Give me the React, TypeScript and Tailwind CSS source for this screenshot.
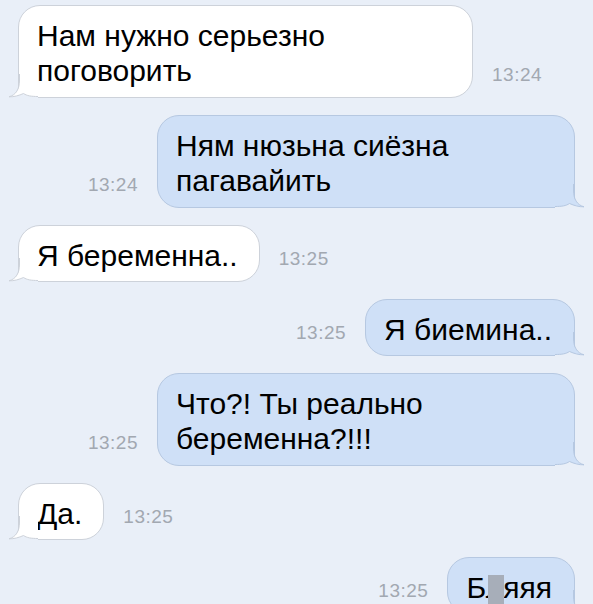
import React from "react";

type Side = "in" | "out";

const Tail = ({ side }: { side: Side }) => {
  const incoming = side === "in";
  const fill = incoming ? "#ffffff" : "#cfe0f7";
  const stroke = incoming ? "#cdd2da" : "#b6c8e1";
  return (
    <svg
      width="30"
      height="24"
      viewBox="0 0 30 24"
      className={
        incoming
          ? "absolute -left-[11px] -bottom-[1px]"
          : "absolute -right-[11px] -bottom-[1px]"
      }
    >
      <g transform={incoming ? undefined : "translate(30 0) scale(-1 1)"}>
        <path
          d="M1 23 C6 23 11 21.5 15.5 19.5 C19 21.8 23 22.5 30 22.5 L30 24 L0 24 Z"
          fill="#e9eff8"
        />
        <path
          d="M12 0 L12 6 C12 15 8 21 1 22.8 C6 23 11 21.5 15.5 19.5 C19 21.8 23 22.5 30 22.5 L30 0 Z"
          fill={fill}
        />
        <path
          d="M11.5 0 L11.5 6 C11.5 15 8 21 1 22.8 C6 23 11 21.5 15.5 19.5 C19 21.8 23 22.5 30 22.5"
          fill="none"
          stroke={stroke}
          strokeWidth="1"
        />
      </g>
    </svg>
  );
};

const Bubble = ({
  side,
  multi,
  className = "",
  children,
}: {
  side: Side;
  multi?: boolean;
  className?: string;
  children: React.ReactNode;
}) => {
  const incoming = side === "in";
  return (
    <div
      className={
        "relative shrink-0 rounded-[22px] border pt-[12px] pl-[18px] text-[30px] leading-[35px] text-black " +
        (multi ? "pb-[9px] " : "pb-[8px] ") +
        (incoming
          ? "bg-white border-[#cdd2da] rounded-bl-none pr-[21px] "
          : "bg-[#cfe0f7] border-[#b6c8e1] rounded-br-none pr-[22px] ") +
        className
      }
    >
      {children}
      <Tail side={side} />
    </div>
  );
};

const Time = ({ children, side }: { children: string; side: Side }) => (
  <span
    className={
      "mb-[13px] text-[19px] leading-5 tracking-[0.5px] text-[#a2a8b1] " +
      (side === "in" ? "ml-[19px]" : "mr-[19px]")
    }
  >
    {children}
  </span>
);

type RowProps = { time: string; multi?: boolean; className?: string; children: React.ReactNode };

const In = ({ time, multi, className, children }: RowProps) => (
  <div className="flex items-end">
    <Bubble side="in" multi={multi} className={className}>
      {children}
    </Bubble>
    <Time side="in">{time}</Time>
  </div>
);

const Out = ({ time, multi, className, children }: RowProps) => (
  <div className="flex items-end justify-end">
    <Time side="out">{time}</Time>
    <Bubble side="out" multi={multi} className={className}>
      {children}
    </Bubble>
  </div>
);

export default function App() {
  return (
    <div className="flex h-[604px] w-full flex-col gap-[17px] overflow-hidden bg-[#e9eff8] px-[18px] pt-[5px] font-['Liberation_Sans',Arial,sans-serif]">
      <In time="13:24" multi className="w-[455px]">
        Нам нужно серьезно
        <br />
        поговорить
      </In>
      <Out time="13:24" multi className="w-[418px]">
        Ням нюзьна сиёзна
        <br />
        пагавайить
      </Out>
      <In time="13:25">Я беременна..</In>
      <Out time="13:25">Я биемина..</Out>
      <Out time="13:25" multi className="w-[418px]">
        Что?! Ты реально
        <br />
        беременна?!!!
      </Out>
      <In time="13:25">Да.</In>
      <Out time="13:25">
        Б
        <span className="relative">
          л
          <span className="absolute left-[2px] top-[4px] h-[30px] w-[16px] bg-[#a7aeb9]" />
        </span>
        яяя
      </Out>
    </div>
  );
}
